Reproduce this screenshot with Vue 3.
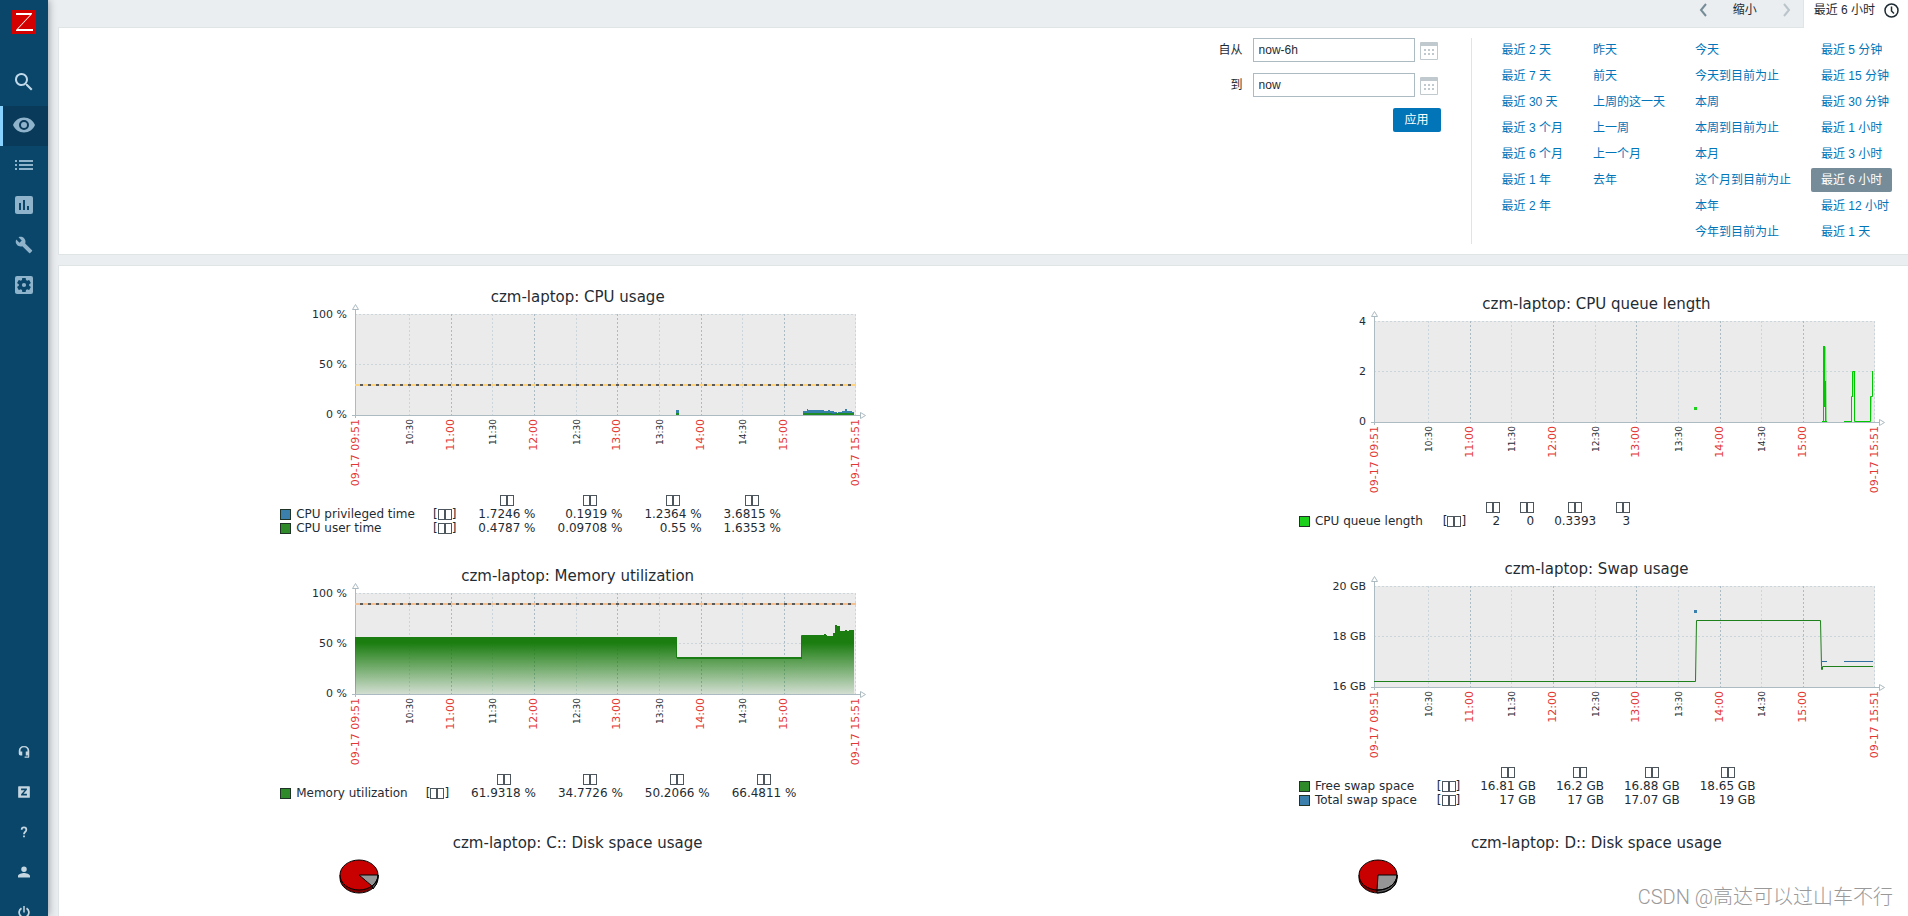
<script setup>
import { ref } from 'vue'

const mainMenu = [
  { id: 'monitoring', label: '监测', size: 24, active: true, path: 'M12 4.5C7 4.5 2.7 7.6 1 12c1.700 4.400 6 7.500 11 7.500s9.300-3.100 11-7.500c-1.700-4.400-6-7.500-11-7.500zM12 17a5 5 0 1 1 0-10 5 5 0 0 1 0 10zm0-8a3 3 0 1 0 0 6 3 3 0 0 0 0-6z' },
  { id: 'services', label: '资产记录', size: 24, path: 'M3 7h2v2H3zM7 7h14v2H7zM3 11h2v2H3zM7 11h14v2H7zM3 15h2v2H3zM7 15h14v2H7z' },
  { id: 'reports', label: '报表', size: 24, path: 'M19 3H5a2 2 0 0 0-2 2v14c0 1.100.9 2 2 2h14a2 2 0 0 0 2-2V5a2 2 0 0 0-2-2zM9 17H7v-7h2v7zm4 0h-2V7h2v10zm4 0h-2v-4h2v4z' },
  { id: 'config', label: '配置', size: 18, path: 'M22.700 19l-9.100-9.100c.9-2.300.4-5-1.500-6.900-2-2-5-2.400-7.400-1.300L9 6 6 9 1.600 4.700C.4 7.100.9 10.100 2.900 12.100c1.900 1.900 4.600 2.400 6.900 1.500l9.100 9.100c.4.4 1 .4 1.400 0l2.300-2.300c.5-.4.5-1.100.1-1.400z' },
  { id: 'admin', label: '管理', size: 24, path: 'M19 3H5a2 2 0 0 0-2 2v14c0 1.100.9 2 2 2h14a2 2 0 0 0 2-2V5a2 2 0 0 0-2-2zM17.200 12l-.1.700 1.500 1.100c.1.100.2.300.1.500l-1.400 2.400c-.1.200-.3.200-.4.200l-1.700-.7-1.200.7-.3 1.800c0 .2-.2.300-.3.300h-2.800c-.2 0-.3-.1-.4-.3l-.2-1.800-1.200-.7-1.700.7c-.2.100-.4 0-.5-.2l-1.400-2.400c-.1-.2 0-.4.100-.5l1.500-1.100V11.300L5.300 10.200c-.1-.1-.2-.3-.1-.5l1.400-2.400c.1-.2.300-.2.500-.2l1.700.7L10 7.100l.2-1.800c.1-.2.200-.3.400-.3h2.800c.1 0 .3.100.3.300l.3 1.800 1.200.7 1.700-.7c.1 0 .3 0 .4.200l1.400 2.400c.1.200 0 .4-.1.500l-1.500 1.100zM12 9.900a2.100 2.100 0 1 0 0 4.200 2.100 2.100 0 0 0 0-4.200z' },
]

const userMenu = [
  { id: 'support', label: '支持', size: 14, path: 'M12 2a8 8 0 0 0-9 8v5a3 3 0 0 0 3 3h3v-7H6v-1a6 6 0 0 1 12 0v1h-3v7h4v1.500h-6v2.500h6a2 2 0 0 0 2-2v-10a8 8 0 0 0-9-8z' },
  { id: 'share', label: '分享', size: 14, path: 'M3 2h18a1 1 0 0 1 1 1v18a1 1 0 0 1-1 1H3a1 1 0 0 1-1-1V3a1 1 0 0 1 1-1zM7 6v3h6l-6 7v2h10v-3h-6l6-7V6z' },
  { id: 'help', label: '帮助', size: 14, path: 'M10.500 18h3v3h-3zM6.500 8a5.500 5.500 0 1 1 11 0c0 4-4 4.500-4 8h-3c0-5 4-5.500 4-8a2.500 2.500 0 0 0-5 0z' },
  { id: 'user', label: '用户', size: 12, path: 'M12 12a5.500 5.500 0 1 0 0-11 5.500 5.500 0 0 0 0 11zM0 23v-3c0-4 8-6 12-6s12 2 12 6v3z' },
  { id: 'logout', label: '退出', size: 12, path: 'M10.500 0h3v13h-3zM18 3l-2 3a8 8 0 1 1-8 0L6 3a11.500 11.500 0 1 0 12 0z' },
]

const from = ref('now-6h')
const to = ref('now')
const selected = ref('最近 6 小时')

const ranges = [
  ['最近 2 天', '最近 7 天', '最近 30 天', '最近 3 个月', '最近 6 个月', '最近 1 年', '最近 2 年'],
  ['昨天', '前天', '上周的这一天', '上一周', '上一个月', '去年'],
  ['今天', '今天到目前为止', '本周', '本周到目前为止', '本月', '这个月到目前为止', '本年', '今年到目前为止'],
  ['最近 5 分钟', '最近 15 分钟', '最近 30 分钟', '最近 1 小时', '最近 3 小时', '最近 6 小时', '最近 12 小时', '最近 1 天'],
]

const ticks = [
  { x: 54, t: '10:30' }, { x: 96, t: '11:00', major: true },
  { x: 137, t: '11:30' }, { x: 179, t: '12:00', major: true },
  { x: 221, t: '12:30' }, { x: 262, t: '13:00', major: true },
  { x: 304, t: '13:30' }, { x: 346, t: '14:00', major: true },
  { x: 387, t: '14:30' }, { x: 429, t: '15:00', major: true },
]
const edges = [{ x: 0, t: '09-17 09:51' }, { x: 500, t: '09-17 15:51' }]

const stats = ['最新', '最小', '平均', '最大']

const BLUE = '#3b7fac'
const GREEN = '#2f8a2a'

const graphs = [
  {
    title: 'czm-laptop: CPU usage',
    percent: true,
    y: ['100 %', '50 %', '0 %'],
    trigger: { y: 71, color: '#ffd480' },
    shapes: [
      { fill: '#3780ab', d: 'M321 96h3v5h-3zM448 101V97H452V95H453V96H469V97H473V96H475V97H479V98H482V99H483V98H487V97H490V95H492V97H497V98H499V101z' },
      { fill: '#2b6f93', d: 'M448 99h51v1h-51z' },
      { fill: '#1f8b25', d: 'M321 99h3v2h-3zM448 99h28v1h4v-1h19v2h-51z' },
    ],
    legend: [
      { color: BLUE, name: 'CPU privileged time', v: ['1.7246 %', '0.1919 %', '1.2364 %', '3.6815 %'] },
      { color: GREEN, name: 'CPU user time', v: ['0.4787 %', '0.09708 %', '0.55 %', '1.6353 %'] },
    ],
  },
  {
    title: 'czm-laptop: CPU queue length',
    y: ['4', '2', '0'],
    shapes: [
      { fill: '#1cd01c', d: 'M320 86h3v3h-3z' },
      { fill: '#80d980', d: 'M451 26h1l1 74h-1zM478 75l1-25h1l-1 25zM496 100l1-25h1l-1 25z' },
      { stroke: '#00c800', d: 'M448 100.500h5M449.500 100V25M450.500 86V25M451.500 100V60M470 100.500h8M477.500 101V75.500h1M478.500 76V50.500h2M480.500 50V100.500H496.500V75.500h2V50' },
    ],
    legend: [{ color: '#1cd01c', name: 'CPU queue length', v: ['2', '0', '0.3393', '3'] }],
  },
  {
    title: 'czm-laptop: Memory utilization',
    percent: true,
    y: ['100 %', '50 %', '0 %'],
    trigger: { y: 11, color: '#f5c091' },
    shapes: [
      { fill: 'url(#memory-fade)', d: 'M0 101V44H322V64H447V42H469V41H471V42H472V43H478V40H480V32H482V33H485V38H490V37H492V38H494V37H499V101z' },
      { stroke: '#1a7d14', d: 'M0 44.500H321.500V64.500H446.500V42.500H469' },
      { fill: '#1a7d14', d: 'M322 64h125v2h-125z' },
    ],
    legend: [{ color: GREEN, name: 'Memory utilization', v: ['61.9318 %', '34.7726 %', '50.2066 %', '66.4811 %'] }],
  },
  {
    title: 'czm-laptop: Swap usage',
    y: ['20 GB', '18 GB', '16 GB'],
    shapes: [
      { fill: '#3b7fac', d: 'M320 24h3v3h-3z' },
      { stroke: '#2f6f9f', d: 'M448 75.500h5M470 75.500h29' },
      { stroke: '#1e801a', d: 'M0 95.500H321.500L322.500 34.500H446.500L447.500 80.500V83.500H448.500V80.500H499' },
    ],
    legend: [
      { color: GREEN, name: 'Free swap space', v: ['16.81 GB', '16.2 GB', '16.88 GB', '18.65 GB'] },
      { color: BLUE, name: 'Total swap space', v: ['17 GB', '17 GB', '17.07 GB', '19 GB'] },
    ],
  },
]

const pies = [
  { title: 'czm-laptop: C:: Disk space usage', slice: 'M20 16H39A19 15 0 0 1 33 27z', side: 'M33 27Q38 24 39 16V19Q38 26 34 30z' },
  { title: 'czm-laptop: D:: Disk space usage', slice: 'M20 16H39A19 15 0 0 1 19 31z', side: 'M19 31Q37 30 39 16V19Q37 33 19 34z' },
]
</script>

<template>
  <div class="page">
    <aside class="sidebar">
      <nav class="menu" aria-label="主菜单">
        <a class="logo" href="#" aria-label="Zabbix">
          <svg width="24" height="24" viewBox="0 0 24 24">
            <path d="M0 0h24v24H0z" fill="#d40000" />
            <path d="M4 3h16v1L6 19h15v2H4v-1L18 5H4z" fill="#fff" />
          </svg>
        </a>
        <a class="item search" href="#" aria-label="搜索">
          <svg width="24" height="24" viewBox="0 0 24 24">
            <path d="M15.500 14h-.8l-.3-.3A6.500 6.500 0 1 0 13.700 14.400l.3.3v.8l5 5 1.500-1.500zm-6 0a4.500 4.500 0 1 1 0-9 4.500 4.500 0 0 1 0 9z" />
          </svg>
        </a>
        <a v-for="m in mainMenu" :key="m.id" class="item section" :class="{ active: m.active }" href="#" :aria-label="m.label">
          <svg :width="m.size" :height="m.size" viewBox="0 0 24 24"><path fill-rule="evenodd" :d="m.path" /></svg>
        </a>
      </nav>
      <nav class="user-menu" aria-label="用户菜单">
        <a v-for="m in userMenu" :key="m.id" class="item" href="#" :aria-label="m.label">
          <svg :width="m.size" :height="m.size" viewBox="0 0 24 24"><path fill-rule="evenodd" :d="m.path" /></svg>
        </a>
      </nav>
    </aside>

    <main class="main">
      <div class="time-nav">
        <button class="arrow" type="button" aria-label="向前">
          <svg width="10" height="14" viewBox="0 0 10 14"><path d="M8 1L3 7l5 6" /></svg>
        </button>
        <button class="zoom-out" type="button">缩小</button>
        <button class="arrow" type="button" aria-label="向后" disabled>
          <svg width="10" height="14" viewBox="0 0 10 14"><path d="M2 1l5 6-5 6" /></svg>
        </button>
        <a class="tab" href="#">
          最近 6 小时
          <svg width="15" height="15" viewBox="0 0 15 15">
            <circle cx="7.500" cy="7.500" r="6.500" /><path d="M7.500 3.500v4.500l2.500 2.500" />
          </svg>
        </a>
      </div>

      <section class="filter">
        <form class="range-form" @submit.prevent>
          <label for="from">自从</label>
          <input id="from" v-model="from" type="text">
          <button class="calendar" type="button" aria-label="选择开始时间">
            <svg width="18" height="18" viewBox="0 0 18 18"><path fill-rule="evenodd" d="M1 0h16a1 1 0 0 1 1 1v16a1 1 0 0 1-1 1H1a1 1 0 0 1-1-1V1a1 1 0 0 1 1-1zM1 4v13h16V4zM4 7h2v2H4zM8 7h2v2H8zM12 7h2v2h-2zM4 11h2v2H4zM8 11h2v2H8zM12 11h2v2h-2z" /></svg>
          </button>
          <label for="to">到</label>
          <input id="to" v-model="to" type="text">
          <button class="calendar" type="button" aria-label="选择结束时间">
            <svg width="18" height="18" viewBox="0 0 18 18"><path fill-rule="evenodd" d="M1 0h16a1 1 0 0 1 1 1v16a1 1 0 0 1-1 1H1a1 1 0 0 1-1-1V1a1 1 0 0 1 1-1zM1 4v13h16V4zM4 7h2v2H4zM8 7h2v2H8zM12 7h2v2h-2zM4 11h2v2H4zM8 11h2v2H8zM12 11h2v2h-2z" /></svg>
          </button>
          <button class="apply" type="submit">应用</button>
        </form>
        <div class="ranges">
          <ul v-for="(col, i) in ranges" :key="i">
            <li v-for="r in col" :key="r">
              <a href="#" :class="{ selected: r === selected }" @click.prevent="selected = r">{{ r }}</a>
            </li>
          </ul>
        </div>
      </section>

      <section class="graphs">
        <figure v-for="g in graphs" :key="g.title" class="graph">
          <figcaption>{{ g.title }}</figcaption>
          <svg class="plot" width="500" height="179" viewBox="0 0 500 179">
            <defs>
              <linearGradient id="memory-fade" gradientUnits="userSpaceOnUse" x1="0" y1="50" x2="0" y2="101">
                <stop offset="0" stop-color="#1b7d10" />
                <stop offset="1" stop-color="#1b7d10" stop-opacity="0.12" />
              </linearGradient>
            </defs>
            <rect class="back" width="501" height="101" />
            <path class="grid" d="M0 .5H501M0 50.500H501M500.500 0V101" />
            <path v-for="t in ticks" :key="t.t" class="grid" :class="{ major: t.major }" :d="`M${t.x}.5 0V101`" />
            <path class="axis" d="M.5-5V104M-3 101.500H505" />
            <path class="tip" d="M.5-9.500L3.500-4.500H-2.500zM505.500 98.500V104.500L510.500 101.500z" />
            <path
              v-for="(s, i) in g.shapes" :key="i" :d="s.d"
              :fill="s.fill || 'none'" :stroke="s.stroke || 'none'"
            />
            <template v-if="g.trigger">
              <path class="trigger" :stroke="g.trigger.color" :d="`M0 ${g.trigger.y}H501`" />
              <path class="trigger dashes" :d="`M5 ${g.trigger.y}H500`" />
            </template>
            <text v-for="(l, i) in g.y" :key="l" class="y-label" x="-8" :y="4 + i * 50">{{ l }}</text>
            <text
              v-for="t in ticks" :key="t.t" class="x-label" :class="{ major: t.major }"
              :transform="`translate(${t.x + (t.major ? 3 : 4)} 105) rotate(-90)`"
            >{{ t.t }}</text>
            <text
              v-for="t in edges" :key="t.t" class="x-label major"
              :transform="`translate(${t.x + 4} 105) rotate(-90)`"
            >{{ t.t }}</text>
          </svg>
          <table class="legend" :class="{ percent: g.percent }">
            <thead>
              <tr>
                <td></td><td></td>
                <th v-for="s in stats" :key="s" scope="col" :aria-label="s"><i class="box"></i><i class="box"></i></th>
              </tr>
            </thead>
            <tbody>
              <tr v-for="l in g.legend" :key="l.name">
                <th scope="row"><span class="swatch" :style="{ background: l.color }"></span>{{ l.name }}</th>
                <td class="func">[<i class="box"></i><i class="box"></i>]</td>
                <td v-for="(v, i) in l.v" :key="i" class="value">{{ v }}</td>
              </tr>
            </tbody>
          </table>
        </figure>

        <figure v-for="p in pies" :key="p.title" class="graph pie">
          <figcaption>{{ p.title }}</figcaption>
          <svg width="40" height="35" viewBox="0 0 40 35">
            <path d="M1 16v3a19 15 0 0 0 38 0v-3z" fill="#800000" stroke="#000" />
            <path :d="p.side" fill="#555" stroke="#000" />
            <ellipse cx="20" cy="16" rx="19" ry="15" fill="#c80000" />
            <path :d="p.slice" fill="#969696" stroke="#000" />
            <ellipse cx="20" cy="16" rx="19" ry="15" fill="none" stroke="#000" />
          </svg>
        </figure>
      </section>
    </main>

    <div class="watermark">CSDN @高达可以过山车不行</div>
  </div>
</template>

<style>
body {
  margin: 0;
}
</style>

<style scoped>
.page {
  position: relative;
  display: flex;
  height: 100vh;
  overflow: hidden;
  background: #ebeef0;
  color: #1f2c33;
  font: 12px/14px "Liberation Sans", "Noto Sans CJK SC", sans-serif;
}

a {
  color: inherit;
  text-decoration: none;
}

button {
  padding: 0;
  border: 0;
  background: none;
  color: inherit;
  font: inherit;
}

/* Sidebar */
.sidebar {
  display: flex;
  flex-direction: column;
  justify-content: space-between;
  flex: 0 0 48px;
  background: #0a466a;
  box-shadow: 0 0 8px rgba(0, 20, 40, 0.45);
}

.logo {
  display: block;
  width: 24px;
  height: 24px;
  margin: 10px 12px 28px;
}

.item {
  display: flex;
  align-items: center;
  justify-content: center;
  height: 40px;
  box-sizing: border-box;
}

.menu .section {
  padding-bottom: 2px;
  fill: #8fb3cb;
}

.menu .search {
  margin-bottom: 4px;
  fill: #c0d9ea;
}

.menu .active {
  padding-right: 3px;
  border-left: 3px solid #87d2ff;
  background: #0a3a59;
}

.user-menu {
  margin-bottom: -16px;
}

.user-menu .item {
  fill: #c5d6e0;
}

/* Time selector */
.main {
  display: flex;
  flex: 1;
  flex-direction: column;
  min-width: 0;
  padding-left: 10px;
}

.time-nav {
  display: flex;
  justify-content: flex-end;
  height: 27px;
  line-height: 20px;
}

.time-nav button {
  height: 20px;
}

.arrow {
  display: flex;
  align-items: center;
  justify-content: center;
  width: 32px;
}

.arrow path {
  fill: none;
  stroke: #768d99;
  stroke-width: 2;
}

.arrow:disabled path {
  stroke: #b9c5cb;
}

.zoom-out {
  width: 52px;
}

.tab {
  position: relative;
  display: flex;
  gap: 9px;
  height: 28px;
  padding: 0 9px 0 10px;
  border-left: 1px solid #dfe4e7;
  background: #fff;
}

.tab svg {
  margin-top: 3px;
  fill: none;
  stroke: #1f2c33;
  stroke-width: 1.5;
}

.filter {
  display: flex;
  justify-content: flex-end;
  gap: 30px;
  padding: 10px 9px 10px 0;
  border: solid #dfe4e7;
  border-width: 1px 0 1px 1px;
  background: #fff;
}

.range-form {
  display: grid;
  grid-template-columns: auto 162px 26px;
  grid-auto-rows: 24px;
  row-gap: 11px;
  align-content: start;
  align-items: center;
}

.range-form label {
  padding-right: 10px;
  text-align: right;
}

.range-form input {
  box-sizing: border-box;
  width: 100%;
  height: 24px;
  padding: 0 5px;
  border: 1px solid #acbbc2;
  background: #fff;
  color: inherit;
  font: inherit;
}

.calendar {
  display: flex;
  justify-content: center;
  padding: 2px 0 0 2px;
  fill: #c0cace;
}

.range-form .apply {
  grid-column: 1 / -1;
  justify-self: end;
  width: 48px;
  height: 24px;
  border-radius: 2px;
  background: #0275b8;
  color: #fff;
}

.ranges {
  display: flex;
  gap: 10px;
  padding-left: 20px;
  border-left: 1px solid #dfe4e7;
}

.ranges ul {
  display: flex;
  flex-direction: column;
  gap: 2px;
  margin: 0;
  padding: 0;
  list-style: none;
}

.ranges a {
  display: inline-block;
  padding: 0 10px;
  border-radius: 2px;
  color: #0275b8;
  line-height: 24px;
  white-space: nowrap;
}

.ranges li {
  height: 24px;
}

.ranges .selected {
  background: #768d99;
  color: #fff;
}

/* Graphs */
.graphs {
  display: grid;
  flex: 1;
  grid-template-columns: 56.1% 54.1%;
  align-content: start;
  align-items: center;
  justify-items: center;
  margin-top: 10px;
  padding-top: 12px;
  border: solid #dfe4e7;
  border-width: 1px 0 0 1px;
  background: #fff;
  font-family: "DejaVu Sans", sans-serif;
}

.graph {
  width: 615px;
  margin: 0;
  padding-bottom: 15px;
}

.graph figcaption {
  height: 36px;
  font-size: 15px;
  line-height: 38px;
  text-align: center;
}

.plot {
  display: block;
  margin-left: 85px;
  overflow: visible;
}

.back {
  fill: #ebebeb;
}

.grid {
  stroke: #ccd5da;
  stroke-dasharray: 2 2;
}

.grid.major {
  stroke: #acbbc2;
}

.axis {
  stroke: #acbbc2;
}

.tip {
  fill: #fff;
  stroke: #acbbc2;
}

.trigger {
  stroke-width: 2;
}

.dashes {
  stroke: #5a5a5a;
  stroke-dasharray: 3 5;
}

.plot text {
  fill: #1f2c33;
  text-anchor: end;
}

.plot .y-label {
  font-size: 11px;
}

.plot .x-label {
  font-size: 9px;
}

.plot .x-label.major {
  fill: #e33734;
  font-size: 11px;
}

.legend {
  margin-left: 10px;
  border-collapse: collapse;
  line-height: 14px;
  white-space: nowrap;
}

.legend th,
.legend td {
  height: 14px;
  padding: 0 0 0 20px;
  font-weight: normal;
  text-align: right;
}

.legend thead th {
  text-align: center;
}

.legend tbody th {
  display: flex;
  align-items: center;
  gap: 5px;
  padding: 0;
}

.percent .func {
  padding-left: 18px;
}

.percent .value,
.percent thead th {
  padding-left: 22px;
}

.box {
  display: inline-block;
  box-sizing: border-box;
  width: 7px;
  height: 11px;
  border: 1px solid #4c565c;
  vertical-align: -2px;
}

.swatch {
  box-sizing: border-box;
  width: 11px;
  height: 11px;
  border: 1px solid #1f3326;
}

.pie {
  padding-top: 2px;
}

.pie figcaption {
  height: 35px;
}

.pie svg {
  display: block;
  margin-left: 69px;
}

.watermark {
  position: absolute;
  right: 15px;
  bottom: 6px;
  color: #999;
  font-family: Roboto, "Noto Sans CJK SC", sans-serif;
  font-size: 20px;
  font-weight: 300;
  line-height: 26px;
  text-shadow: -1px -1px 0 #fff;
}
</style>
